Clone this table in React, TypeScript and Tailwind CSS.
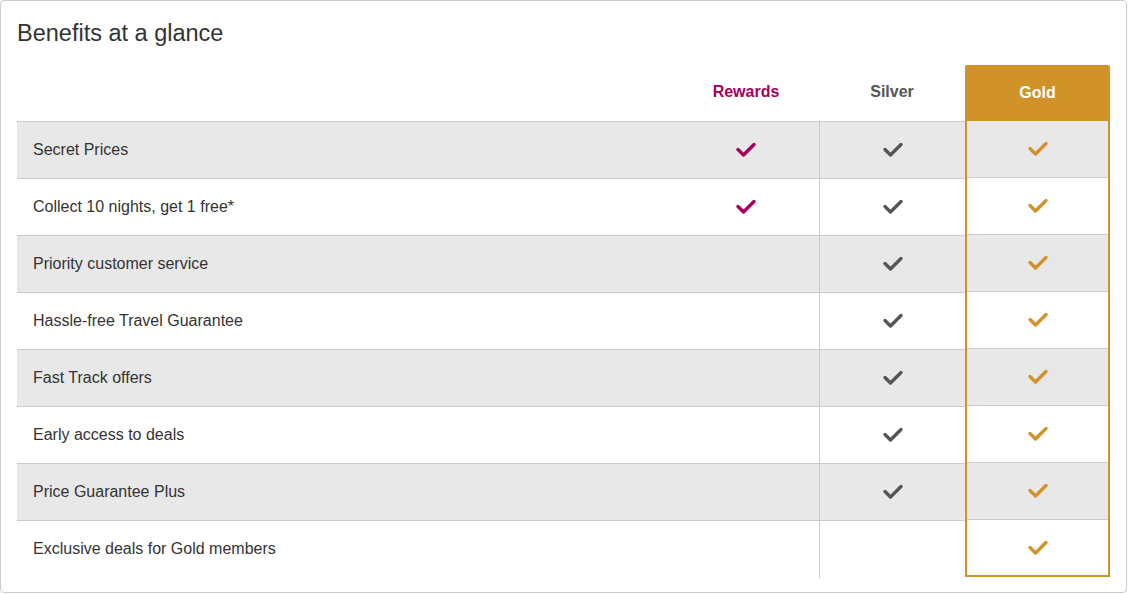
import React from "react";

const rows: { label: string; r: boolean; s: boolean; g: boolean }[] = [
  { label: "Secret Prices", r: true, s: true, g: true },
  { label: "Collect 10 nights, get 1 free*", r: true, s: true, g: true },
  { label: "Priority customer service", r: false, s: true, g: true },
  { label: "Hassle-free Travel Guarantee", r: false, s: true, g: true },
  { label: "Fast Track offers", r: false, s: true, g: true },
  { label: "Early access to deals", r: false, s: true, g: true },
  { label: "Price Guarantee Plus", r: false, s: true, g: true },
  { label: "Exclusive deals for Gold members", r: false, s: false, g: true },
];

function Check({ color }: { color: string }) {
  return (
    <svg width="22" height="18" viewBox="0 0 22 18" fill="none">
      <path d="M3 8.5 L8.5 14 L19 3.5" stroke={color} strokeWidth="3.4" strokeLinecap="round" strokeLinejoin="round" />
    </svg>
  );
}

export default function App() {
  return (
    <div className="w-[1128px] h-[594px] bg-white" style={{ fontFamily: '"Liberation Sans", Arial, sans-serif' }}>
      <div className="w-[1127px] h-[593px] border border-[#cccccc] rounded-[4px] pl-4 pr-4 pt-[17px]">
        <h2 className="text-[23.5px] leading-[30px] text-[#333333] font-normal">Benefits at a glance</h2>
        <div className="mt-[18px] w-[1093px] flex">
          <div className="flex-1 flex flex-col">
            <div className="h-[56px] border-b border-[#cccccc]" />
            {rows.map((row, i) => (
              <div
                key={i}
                className={`h-[57px] border-b border-[#cccccc] flex items-center pl-4 pb-px text-[16px] text-[#333333] ${i % 2 === 0 ? "bg-[#e8e8e8]" : "bg-white"} ${i === rows.length - 1 ? "border-b-0" : ""}`}
              >
                {row.label}
              </div>
            ))}
          </div>
          <div className="w-[146px] flex flex-col">
            <div className="h-[56px] border-b border-[#cccccc] flex items-center justify-center pb-[3px] text-[16px] font-bold text-[#a6005b]">Rewards</div>
            {rows.map((row, i) => (
              <div
                key={i}
                className={`h-[57px] border-b border-[#cccccc] flex items-center justify-center ${i % 2 === 0 ? "bg-[#e8e8e8]" : "bg-white"} ${i === rows.length - 1 ? "border-b-0" : ""}`}
              >
                {row.r && <Check color="#a6005b" />}
              </div>
            ))}
          </div>
          <div className="w-[146px] flex flex-col">
            <div className="h-[56px] border-b border-[#cccccc] flex items-center justify-center pb-[3px] text-[16px] font-bold text-[#555555]">Silver</div>
            {rows.map((row, i) => (
              <div
                key={i}
                className={`h-[57px] border-b border-l border-[#cccccc] flex items-center justify-center ${i % 2 === 0 ? "bg-[#e8e8e8]" : "bg-white"} ${i === rows.length - 1 ? "border-b-0" : ""}`}
              >
                {row.s && <Check color="#555555" />}
              </div>
            ))}
          </div>
          <div className="w-[145px] flex flex-col self-start -mt-px border-2 border-[#d1922a] rounded-t-[2px]">
            <div className="h-[54px] bg-[#d1922a] flex items-center justify-center pb-[2px] text-[16px] font-bold text-white">Gold</div>
            {rows.map((row, i) => (
              <div
                key={i}
                className={`flex items-center justify-center ${i % 2 === 0 ? "bg-[#e8e8e8]" : "bg-white"} ${i === rows.length - 1 ? "h-[55px]" : "h-[57px] border-b border-[#cccccc]"}`}
              >
                {row.g && <Check color="#d1922a" />}
              </div>
            ))}
          </div>
        </div>
      </div>
    </div>
  );
}
